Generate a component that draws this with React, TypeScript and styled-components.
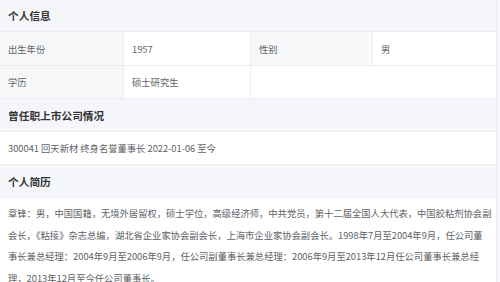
import { createGlobalStyle, styled } from 'styled-components'

const GlobalStyle = createGlobalStyle`
  *, *::before, *::after {
    box-sizing: border-box;
  }
  html, body {
    margin: 0;
    padding: 0;
    background: #f5f6fa;
    font-family: "Noto Sans CJK SC", "Noto Sans", "Liberation Sans", sans-serif;
  }
`

type Field = { label: string; value: string }

const basicRows: Field[][] = [
  [
    { label: '出生年份', value: '1957' },
    { label: '性别', value: '男' },
  ],
  [{ label: '学历', value: '硕士研究生' }],
]

const companies = ['300041 回天新材 终身名誉董事长 2022-01-06 至今']

// 简历按行拆分，保持固定换行位置
const resumeLines = [
  '章锋：男，中国国籍，无境外居留权，硕士学位，高级经济师，中共党员，第十二届全国人大代表，中国胶粘剂协会副',
  '会长，《粘接》杂志总编，湖北省企业家协会副会长，上海市企业家协会副会长。1998年7月至2004年9月，任公司董',
  '事长兼总经理：2004年9月至2006年9月，任公司副董事长兼总经理：2006年9月至2013年12月任公司董事长兼总经',
  '理，2013年12月至今任公司董事长。',
]

function App() {
  return (
    <>
      <GlobalStyle />
      <StPanel>
        <StSectionTitle $first>个人信息</StSectionTitle>
        <StGrid>
          {basicRows.map((row, rowIndex) => (
            <StGridRow key={`row${rowIndex}`}>
              {[0, 1].map((i) =>
                row[i] ? (
                  <StPair key={`pair${i}`}>
                    <StLabel>{row[i].label}</StLabel>
                    <StValue>{row[i].value}</StValue>
                  </StPair>
                ) : (
                  <StPair key={`pair${i}`}>
                    <StValue />
                    <StValue />
                  </StPair>
                )
              )}
            </StGridRow>
          ))}
        </StGrid>
        <StSectionTitle>曾任职上市公司情况</StSectionTitle>
        {companies.map((c, index) => (
          <StLine key={`company${index}`}>{c}</StLine>
        ))}
        <StSectionTitle>个人简历</StSectionTitle>
        <StResume>
          {resumeLines.map((line, index) => (
            <p key={`resume${index}`}>{line}</p>
          ))}
        </StResume>
      </StPanel>
    </>
  )
}

export default App

// #region styles

const StPanel = styled.div`
  width: 497px;
  border-right: 1px solid #ebedf2;
  background: #ffffff;
  display: flex;
  flex-direction: column;
`

const StSectionTitle = styled.div<{ $first?: boolean }>`
  height: ${(p) => (p.$first ? '32px' : '33px')};
  display: flex;
  align-items: center;
  padding: 0 8px;
  background: #f5f6fa;
  color: #333333;
  font-size: 10.7px;
  font-weight: 700;
  border-bottom: 1px solid #ebedf2;
`

const StGrid = styled.div`
  display: flex;
  flex-direction: column;
`

const StGridRow = styled.div`
  display: grid;
  grid-template-columns: 250px 1fr;
  height: 33px;
  border-bottom: 1px solid #ebedf2;

  &:first-child {
    height: 34px;
  }
`

const StPair = styled.div`
  display: grid;
  grid-template-columns: 124px 1fr;

  & + & {
    grid-template-columns: 122px 1fr;
    border-left: 1px solid #ebedf2;
  }
`

const StCell = styled.div`
  display: flex;
  align-items: center;
  padding: 0 8px;
  font-size: 9.3px;
  color: #606266;
`

const StLabel = styled(StCell)`
  background: #f7f8fa;
  border-right: 1px solid #ebedf2;
`

const StValue = styled(StCell)`
  background: #ffffff;
`

const StLine = styled(StCell)`
  height: 33px;
  border-bottom: 1px solid #ebedf2;
`

const StResume = styled.div`
  padding: 5px 0 8px 8px;
  font-size: 9.3px;
  line-height: 21.7px;
  color: #606266;

  & > p {
    margin: 0;
    white-space: nowrap;
  }
`

// #endregion styles
